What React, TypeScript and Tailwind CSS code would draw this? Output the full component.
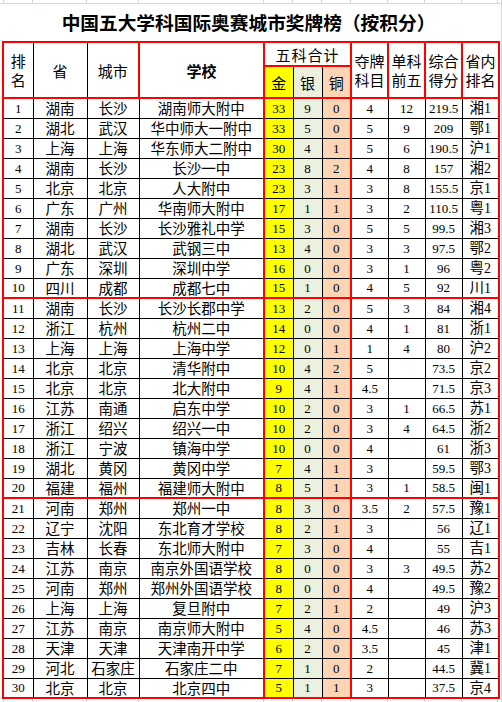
import React from "react";

type Row = [string, string, string, string, string, string, string, string, string, string, string];

const rows: Row[] = [
  ["1", "湖南", "长沙", "湖南师大附中", "33", "9", "0", "4", "12", "219.5", "湘1"],
  ["2", "湖北", "武汉", "华中师大一附中", "33", "5", "0", "5", "9", "209", "鄂1"],
  ["3", "上海", "上海", "华东师大二附中", "30", "4", "1", "5", "6", "190.5", "沪1"],
  ["4", "湖南", "长沙", "长沙一中", "23", "8", "2", "4", "8", "157", "湘2"],
  ["5", "北京", "北京", "人大附中", "23", "3", "1", "3", "8", "155.5", "京1"],
  ["6", "广东", "广州", "华南师大附中", "17", "1", "1", "3", "2", "110.5", "粤1"],
  ["7", "湖南", "长沙", "长沙雅礼中学", "15", "3", "0", "5", "5", "99.5", "湘3"],
  ["8", "湖北", "武汉", "武钢三中", "13", "4", "0", "3", "3", "97.5", "鄂2"],
  ["9", "广东", "深圳", "深圳中学", "16", "0", "0", "3", "1", "96", "粤2"],
  ["10", "四川", "成都", "成都七中", "15", "1", "0", "4", "5", "92", "川1"],
  ["11", "湖南", "长沙", "长沙长郡中学", "13", "2", "0", "5", "3", "84", "湘4"],
  ["12", "浙江", "杭州", "杭州二中", "14", "0", "0", "4", "1", "81", "浙1"],
  ["13", "上海", "上海", "上海中学", "12", "0", "1", "1", "4", "80", "沪2"],
  ["14", "北京", "北京", "清华附中", "10", "4", "2", "5", "", "73.5", "京2"],
  ["15", "北京", "北京", "北大附中", "9", "4", "1", "4.5", "", "71.5", "京3"],
  ["16", "江苏", "南通", "启东中学", "10", "2", "0", "3", "1", "66.5", "苏1"],
  ["17", "浙江", "绍兴", "绍兴一中", "10", "2", "0", "3", "4", "64.5", "浙2"],
  ["18", "浙江", "宁波", "镇海中学", "10", "0", "0", "4", "", "61", "浙3"],
  ["19", "湖北", "黄冈", "黄冈中学", "7", "4", "1", "3", "", "59.5", "鄂3"],
  ["20", "福建", "福州", "福建师大附中", "8", "5", "1", "3", "1", "58.5", "闽1"],
  ["21", "河南", "郑州", "郑州一中", "8", "3", "0", "3.5", "2", "57.5", "豫1"],
  ["22", "辽宁", "沈阳", "东北育才学校", "8", "2", "1", "3", "", "56", "辽1"],
  ["23", "吉林", "长春", "东北师大附中", "7", "3", "0", "4", "", "55", "吉1"],
  ["24", "江苏", "南京", "南京外国语学校", "8", "0", "0", "3", "3", "49.5", "苏2"],
  ["25", "河南", "郑州", "郑州外国语学校", "8", "0", "0", "4", "", "49.5", "豫2"],
  ["26", "上海", "上海", "复旦附中", "7", "2", "1", "2", "", "49", "沪3"],
  ["27", "江苏", "南京", "南京师大附中", "5", "4", "0", "4.5", "", "46", "苏3"],
  ["28", "天津", "天津", "天津南开中学", "6", "2", "0", "3.5", "", "45", "津1"],
  ["29", "河北", "石家庄", "石家庄二中", "7", "1", "0", "2", "", "44.5", "冀1"],
  ["30", "北京", "北京", "北京四中", "5", "1", "1", "3", "", "37.5", "京4"],
];

const cjk = "font-['Noto_Sans_CJK_SC',sans-serif] text-[14.5px]";
const num = "font-['Liberation_Serif','Noto_Sans_CJK_SC',serif] text-[13px]";

function cellClass(c: number, r: number) {
  const parts = ["border border-black p-0 text-center align-middle leading-none whitespace-nowrap text-black"];
  if (c === 0) parts.push("border-l-2 border-l-[#ff0000]");
  if (c === 3 || c === 6 || c === 10) parts.push("border-r-2 border-r-[#ff0000]");
  if (r % 10 === 9) parts.push("border-b-2 border-b-[#ff0000]");
  if (c === 4) parts.push("bg-[#ffff00]");
  else if (c === 5) parts.push("bg-[#ebf1de]");
  else if (c === 6) parts.push("bg-[#fcd5b4]");
  if (c >= 1 && c <= 3) parts.push(cjk);
  else parts.push(num);
  return parts.join(" ");
}

function GridStrip({ h }: { h: string }) {
  const w = ["w-[29px]", "w-[54px]", "w-[52px]", "w-[125px]", "w-[29px]", "w-[29px]", "w-[29px]", "w-[37px]", "w-[37px]", "w-[37px]", "w-[36px]"];
  return (
    <div className={`flex ${h} border-l border-[#d0d7e5] ml-[3px]`}>
      {w.map((x, i) => (
        <div key={i} className={`${x} shrink-0 border-r border-[#d0d7e5]`} />
      ))}
    </div>
  );
}

export default function App() {
  const hd = "border-2 border-[#ff0000] p-0 text-center align-middle text-black font-['Noto_Sans_CJK_SC',sans-serif] text-[15px] leading-[19px]";
  return (
    <div className="w-[502px] h-[702px] overflow-hidden bg-white border-r border-[#d0d7e5]">
      <div className="border-b border-[#d0d7e5]">
        <GridStrip h="h-[3px]" />
      </div>
      <div className="h-[37px] flex items-center justify-center w-[497px] font-['Noto_Sans_CJK_SC',sans-serif] font-bold text-[18.7px] text-black">
        中国五大学科国际奥赛城市奖牌榜（按积分）
      </div>
      <table className="border-collapse table-fixed w-[496px] ml-[2px]">
        <colgroup>
          <col className="w-[30px]" />
          <col className="w-[54px]" />
          <col className="w-[52px]" />
          <col className="w-[125px]" />
          <col className="w-[29px]" />
          <col className="w-[29px]" />
          <col className="w-[29px]" />
          <col className="w-[37px]" />
          <col className="w-[37px]" />
          <col className="w-[37px]" />
          <col className="w-[37px]" />
        </colgroup>
        <thead>
          <tr className="h-[24px]">
            <th rowSpan={2} className={`${hd} font-normal border-r border-r-black`}>排<br />名</th>
            <th rowSpan={2} className={`${hd} font-normal border-l border-r border-l-black border-r-black`}>省</th>
            <th rowSpan={2} className={`${hd} font-normal border-l border-l-black`}>城市</th>
            <th rowSpan={2} className={`${hd} font-bold`}>学校</th>
            <th colSpan={3} className={`${hd} font-normal tracking-[1px]`}>五科合计</th>
            <th rowSpan={2} className={`${hd} font-normal`}>夺牌<br />科目</th>
            <th rowSpan={2} className={`${hd} font-normal`}>单科<br />前五</th>
            <th rowSpan={2} className={`${hd} font-normal`}>综合<br />得分</th>
            <th rowSpan={2} className={`${hd} font-normal`}>省内<br />排名</th>
          </tr>
          <tr className="h-[32px]">
            <th className={`${hd} font-normal bg-[#ffff00] border-r border-r-black`}>金</th>
            <th className={`${hd} font-normal bg-[#ebf1de] border-l border-r border-l-black border-r-black`}>银</th>
            <th className={`${hd} font-normal bg-[#fcd5b4] border-l border-l-black`}>铜</th>
          </tr>
        </thead>
        <tbody>
          {rows.map((row, r) => (
            <tr key={r} className="h-[20px]">
              {row.map((v, c) => (
                <td key={c} className={cellClass(c, r)}>
                  {c === 10 ? (
                    <>
                      <span className={cjk}>{v.slice(0, 1)}</span>
                      <span className="text-[14px]">{v.slice(1)}</span>
                    </>
                  ) : (
                    v
                  )}
                </td>
              ))}
            </tr>
          ))}
        </tbody>
      </table>
      <GridStrip h="h-[10px]" />
    </div>
  );
}
